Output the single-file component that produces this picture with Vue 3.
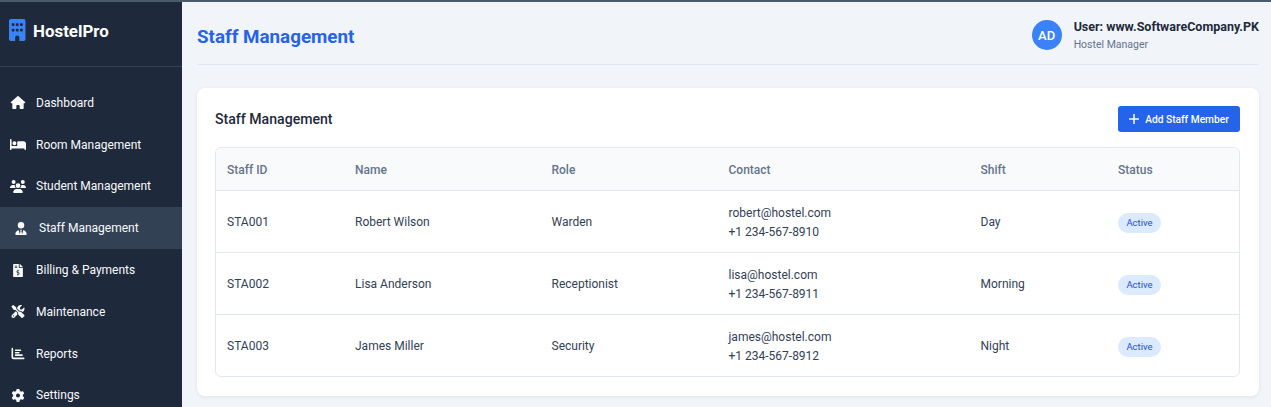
<script setup>
const nav = [
  { label: 'Dashboard', vb: '0 0 576 512', d: 'M575.8 255.5c0 18-15 32.1-32 32.1h-32l.7 160.2c0 2.7-.2 5.4-.5 8.1V472c0 22.1-17.9 40-40 40H456c-1.1 0-2.2 0-3.3-.1c-1.4 .1-2.8 .1-4.2 .1H416 392c-22.1 0-40-17.9-40-40V448 384c0-17.7-14.3-32-32-32H256c-17.7 0-32 14.3-32 32v64 24c0 22.1-17.9 40-40 40H160 128.1c-1.5 0-3-.1-4.5-.2c-1.2 .1-2.4 .2-3.6 .2H104c-22.1 0-40-17.9-40-40V360c0-.9 0-1.9 .1-2.8V287.6H32c-18 0-32-14-32-32.1c0-9 3-17 10-24L266.4 8c7-7 15-8 22-8s15 2 21 7L564.8 231.5c8 7 12 15 11 24z' },
  { label: 'Room Management', vb: '0 0 640 512', d: 'M32 32c17.7 0 32 14.3 32 32V320H288V160c0-17.7 14.3-32 32-32H544c53 0 96 43 96 96V448c0 17.7-14.3 32-32 32s-32-14.3-32-32V416H352 320 64v32c0 17.7-14.3 32-32 32s-32-14.3-32-32V64C0 46.3 14.3 32 32 32zm144 96a80 80 0 1 1 0 160 80 80 0 1 1 0-160z' },
  { label: 'Student Management', vb: '0 0 640 512', d: 'M144 0a80 80 0 1 1 0 160A80 80 0 1 1 144 0zM512 0a80 80 0 1 1 0 160A80 80 0 1 1 512 0zM0 298.7C0 239.8 47.8 192 106.7 192h42.7c15.9 0 31 3.5 44.6 9.7c-1.3 7.2-1.9 14.7-1.9 22.3c0 38.2 16.8 72.5 43.3 96c-.2 0-.4 0-.7 0H21.3C9.6 320 0 310.4 0 298.7zM405.3 320c-.2 0-.4 0-.7 0c26.6-23.5 43.3-57.8 43.3-96c0-7.6-.7-15-1.9-22.3c13.6-6.3 28.7-9.7 44.6-9.7h42.7C592.2 192 640 239.8 640 298.7c0 11.8-9.6 21.3-21.3 21.3H405.3zM224 224a96 96 0 1 1 192 0 96 96 0 1 1 -192 0zM128 485.3C128 411.7 187.7 352 261.3 352H378.7C452.3 352 512 411.7 512 485.3c0 14.7-11.9 26.7-26.7 26.7H154.7c-14.7 0-26.7-11.9-26.7-26.7z' },
  { label: 'Staff Management', active: true, vb: '0 0 448 512', d: 'M96 128a128 128 0 1 0 256 0A128 128 0 1 0 96 128zm94.5 200.2l18.6 31L175.8 483.1l-36-146.9c-2-8.1-9.8-13.4-17.9-11.3C51.9 342.4 0 405.8 0 481.3c0 17 13.8 30.7 30.7 30.7H162.5c0 0 0 0 .1 0H168 280h5.5c0 0 0 0 .1 0H417.3c17 0 30.7-13.8 30.7-30.7c0-75.5-51.9-138.9-121.9-156.4c-8.1-2-15.9 3.3-17.9 11.3l-36 146.9L238.9 359.2l18.6-31c6.4-10.7-1.3-24.2-13.7-24.2H224 204.3c-12.4 0-20.1 13.6-13.7 24.2z' },
  { label: 'Billing & Payments', vb: '0 0 384 512', d: 'M377 105L279.1 7c-4.5-4.5-10.6-7-17-7H256v128h128v-6.1c0-6.3-2.5-12.4-7-16.9zm-153 31V0H24C10.7 0 0 10.7 0 24v464c0 13.3 10.7 24 24 24h336c13.3 0 24-10.7 24-24V160H248c-13.2 0-24-10.8-24-24zM64 72c0-4.42 3.58-8 8-8h80c4.42 0 8 3.58 8 8v16c0 4.42-3.58 8-8 8H72c-4.42 0-8-3.58-8-8V72zm0 80v-16c0-4.42 3.58-8 8-8h80c4.42 0 8 3.58 8 8v16c0 4.42-3.58 8-8 8H72c-4.42 0-8-3.58-8-8zm144 263.88V440c0 4.42-3.58 8-8 8h-16c-4.42 0-8-3.58-8-8v-24.29c-11.29-.58-22.27-4.52-31.37-11.35-3.9-2.93-4.1-8.77-.57-12.14l11.75-11.21c2.77-2.64 6.89-2.76 10.13-.73 3.87 2.42 8.26 3.72 12.82 3.72h28.11c6.5 0 11.8-5.92 11.8-13.19 0-5.95-3.61-11.19-8.77-12.73l-45-13.5c-18.59-5.58-31.58-23.42-31.58-43.39 0-24.52 19.05-44.44 42.67-45.07V232c0-4.42 3.58-8 8-8h16c4.42 0 8 3.58 8 8v24.29c11.29.58 22.27 4.51 31.37 11.35 3.9 2.93 4.1 8.77.57 12.14l-11.75 11.21c-2.77 2.64-6.89 2.76-10.13.73-3.87-2.43-8.26-3.72-12.82-3.72h-28.11c-6.5 0-11.8 5.92-11.8 13.19 0 5.95 3.61 11.19 8.77 12.73l45 13.5c18.59 5.58 31.58 23.42 31.58 43.39 0 24.53-19.05 44.44-42.67 45.07z' },
  { label: 'Maintenance', vb: '0 0 512 512', d: 'M78.6 5C69.1-2.4 55.6-1.5 47 7L7 47c-8.5 8.5-9.4 22-2.1 31.6l80 104c4.5 5.9 11.6 9.4 19 9.4h54.1l109 109c-14.7 29-10 65.4 14.3 89.6l112 112c12.5 12.5 32.8 12.5 45.3 0l64-64c12.5-12.5 12.5-32.8 0-45.3l-112-112c-24.2-24.2-60.6-29-89.6-14.3l-109-109V104c0-7.5-3.5-14.5-9.4-19L78.6 5zM19.9 396.1C7.2 408.8 0 426.1 0 444.1C0 481.6 30.4 512 67.9 512c18 0 35.3-7.2 48-19.9L233.7 374.3c-7.8-20.9-9-43.6-3.6-65.1l-61.7-61.7L19.9 396.1zM512 144c0-10.5-1.1-20.7-3.2-30.5c-2.4-11.2-16.1-14.1-24.2-6l-63.9 63.9c-3 3-7.1 4.7-11.3 4.7H352c-8.8 0-16-7.2-16-16V102.6c0-4.2 1.7-8.3 4.7-11.3l63.9-63.9c8.1-8.1 5.2-21.8-6-24.2C388.7 1.1 378.5 0 368 0C288.5 0 224 64.5 224 144l0 .8 85.3 85.3c36-9.1 75.8 .5 104 28.7L429 274.5c49-23 83-72.8 83-130.5zM56 432a24 24 0 1 1 48 0 24 24 0 1 1 -48 0z' },
  { label: 'Reports', vb: '0 0 512 512', d: 'M32 32c17.7 0 32 14.3 32 32V400c0 8.8 7.2 16 16 16H480c17.7 0 32 14.3 32 32s-14.3 32-32 32H80c-44.2 0-80-35.8-80-80V64C0 46.3 14.3 32 32 32zm96 96c0-17.7 14.3-32 32-32l192 0c17.7 0 32 14.3 32 32s-14.3 32-32 32l-192 0c-17.7 0-32-14.3-32-32zm32 64H288c17.7 0 32 14.3 32 32s-14.3 32-32 32H160c-17.7 0-32-14.3-32-32s14.3-32 32-32zm0 96H416c17.7 0 32 14.3 32 32s-14.3 32-32 32H160c-17.7 0-32-14.3-32-32s14.3-32 32-32z' },
  { label: 'Settings', vb: '0 0 512 512', d: 'M495.9 166.6c3.2 8.7 .5 18.4-6.4 24.6l-43.3 39.4c1.1 8.3 1.7 16.8 1.7 25.4s-.6 17.1-1.7 25.4l43.3 39.4c6.9 6.2 9.6 15.9 6.4 24.6c-4.4 11.9-9.7 23.3-15.8 34.3l-4.7 8.1c-6.6 11-14 21.4-22.1 31.2c-5.9 7.2-15.7 9.6-24.5 6.8l-55.7-17.7c-13.4 10.3-28.2 18.9-44 25.4l-12.5 57.1c-2 9.1-9 16.3-18.2 17.8c-13.8 2.3-28 3.5-42.5 3.5s-28.7-1.2-42.5-3.5c-9.2-1.5-16.2-8.7-18.2-17.8l-12.5-57.1c-15.8-6.5-30.6-15.1-44-25.4L83.1 425.9c-8.8 2.8-18.6 .3-24.5-6.8c-8.1-9.8-15.5-20.2-22.1-31.2l-4.7-8.1c-6.1-11-11.4-22.4-15.8-34.3c-3.2-8.7-.5-18.4 6.4-24.6l43.3-39.4C64.6 273.1 64 264.6 64 256s.6-17.1 1.7-25.4L22.4 191.2c-6.9-6.2-9.6-15.9-6.4-24.6c4.4-11.9 9.7-23.3 15.8-34.3l4.7-8.1c6.6-11 14-21.4 22.1-31.2c5.9-7.2 15.7-9.6 24.5-6.8l55.7 17.7c13.4-10.3 28.2-18.9 44-25.4l12.5-57.1c2-9.1 9-16.3 18.2-17.8C227.3 1.2 241.5 0 256 0s28.7 1.2 42.5 3.5c9.2 1.5 16.2 8.7 18.2 17.8l12.5 57.1c15.8 6.5 30.6 15.1 44 25.4l55.7-17.7c8.8-2.8 18.6-.3 24.5 6.8c8.1 9.8 15.5 20.2 22.1 31.2l4.7 8.1c6.1 11 11.4 22.4 15.8 34.3zM256 336a80 80 0 1 0 0-160 80 80 0 1 0 0 160z' }
]
const staff = [
  { id: 'STA001', name: 'Robert Wilson', role: 'Warden', email: 'robert@hostel.com', phone: '+1 234-567-8910', shift: 'Day' },
  { id: 'STA002', name: 'Lisa Anderson', role: 'Receptionist', email: 'lisa@hostel.com', phone: '+1 234-567-8911', shift: 'Morning' },
  { id: 'STA003', name: 'James Miller', role: 'Security', email: 'james@hostel.com', phone: '+1 234-567-8912', shift: 'Night' }
]
</script>

<template>
  <div class="page">
    <div class="topline"></div>
    <div class="shell">
      <aside class="sidebar">
        <div class="brand">
          <svg class="logo" viewBox="0 0 384 512">
            <path fill="#3b82f6" d="M48 0C21.5 0 0 21.5 0 48V464c0 26.5 21.5 48 48 48h96V432c0-26.5 21.5-48 48-48s48 21.5 48 48v80h96c26.5 0 48-21.5 48-48V48c0-26.5-21.5-48-48-48H48zM64 240c0-8.8 7.2-16 16-16h32c8.8 0 16 7.2 16 16v32c0 8.8-7.2 16-16 16H80c-8.8 0-16-7.2-16-16V240zm112-16h32c8.8 0 16 7.2 16 16v32c0 8.8-7.2 16-16 16H176c-8.8 0-16-7.2-16-16V240c0-8.8 7.2-16 16-16zm80 16c0-8.8 7.2-16 16-16h32c8.8 0 16 7.2 16 16v32c0 8.8-7.2 16-16 16H272c-8.8 0-16-7.2-16-16V240zM80 96h32c8.8 0 16 7.2 16 16v32c0 8.8-7.2 16-16 16H80c-8.8 0-16-7.2-16-16V112c0-8.8 7.2-16 16-16zm80 16c0-8.8 7.2-16 16-16h32c8.8 0 16 7.2 16 16v32c0 8.8-7.2 16-16 16H176c-8.8 0-16-7.2-16-16V112zM272 96h32c8.8 0 16 7.2 16 16v32c0 8.8-7.2 16-16 16H272c-8.8 0-16-7.2-16-16V112c0-8.8 7.2-16 16-16z" />
          </svg>
          <span class="brand-name">HostelPro</span>
        </div>
        <nav class="nav">
          <a v-for="item in nav" :key="item.label" class="nav-item" :class="{ active: item.active }">
            <span class="nav-icon"><svg :viewBox="item.vb"><path fill="currentColor" :d="item.d" /></svg></span>
            <span>{{ item.label }}</span>
          </a>
        </nav>
      </aside>
      <main class="main">
        <header class="header">
          <h1 class="title">Staff Management</h1>
          <div class="user">
            <div class="avatar">AD</div>
            <div>
              <div class="user-name">User: www.SoftwareCompany.PK</div>
              <div class="user-role">Hostel Manager</div>
            </div>
          </div>
        </header>
        <section class="card">
          <div class="card-head">
            <h2 class="card-title">Staff Management</h2>
            <button class="add-btn">
              <svg viewBox="0 0 10 10"><path d="M5 .5v9M.5 5h9" stroke="currentColor" stroke-width="1.5" stroke-linecap="round" /></svg>
              Add Staff Member
            </button>
          </div>
          <div class="table-wrap">
            <table class="table">
              <thead>
                <tr>
                  <th class="c1">Staff ID</th>
                  <th class="c2">Name</th>
                  <th class="c3">Role</th>
                  <th class="c4">Contact</th>
                  <th class="c5">Shift</th>
                  <th>Status</th>
                </tr>
              </thead>
              <tbody>
                <tr v-for="s in staff" :key="s.id">
                  <td>{{ s.id }}</td>
                  <td>{{ s.name }}</td>
                  <td>{{ s.role }}</td>
                  <td>{{ s.email }}<br />{{ s.phone }}</td>
                  <td>{{ s.shift }}</td>
                  <td><span class="badge">Active</span></td>
                </tr>
              </tbody>
            </table>
          </div>
        </section>
      </main>
    </div>
  </div>
</template>

<style>
html, body { margin: 0; overflow: hidden; }
</style>

<style scoped>
.page {
  width: 1271px;
  height: 407px;
  overflow: hidden;
  display: flex;
  flex-direction: column;
  font-family: Roboto, sans-serif;
  background: #f1f5f9;
}
.topline { height: 2px; flex: none; background: #4b5a68; }
.shell { flex: 1; display: flex; min-height: 0; }
.sidebar {
  width: 182px;
  flex: none;
  background: #1e293b;
  color: #fff;
}
.brand {
  height: 65px;
  box-sizing: border-box;
  border-bottom: 1px solid #334155;
  padding: 17px 0 0 9px;
  display: flex;
  align-items: flex-start;
  gap: 7.5px;
}
.logo { width: 16.5px; height: 22px; flex: none; }
.brand-name { font-size: 16.9px; font-weight: 700; line-height: 24px; }
.nav { padding-top: 15px; }
.nav-item {
  height: 41.8px;
  display: flex;
  align-items: center;
  padding-left: 10px;
  font-size: 12px;
  color: #f8fafc;
}
.nav-item.active { background: #334155; padding-left: 13px; }
.nav-icon { width: 26px; flex: none; display: flex; }
.nav-icon svg { width: 16px; height: 13px; }
.main { flex: 1; min-width: 0; padding: 0 12px 0 15px; }
.header {
  height: 63px;
  box-sizing: border-box;
  border-bottom: 1px solid #e2e8f0;
  display: flex;
  justify-content: space-between;
  align-items: center;
  padding-top: 4px;
}
.title { margin: 3px 0 0; font-size: 18.8px; font-weight: 700; color: #2563eb; }
.user { display: flex; align-items: center; gap: 12px; }
.avatar {
  width: 30px;
  height: 30px;
  border-radius: 50%;
  background: #3b82f6;
  color: #fff;
  font-size: 13px;
  font-weight: 500;
  display: flex;
  align-items: center;
  justify-content: center;
}
.user-name { font-size: 12.5px; font-weight: 700; color: #1e293b; line-height: 18px; }
.user-role { font-size: 10.5px; color: #64748b; line-height: 16px; margin-top: 1px; }
.card {
  margin-top: 23px;
  height: 308px;
  box-sizing: border-box;
  background: #fff;
  border-radius: 8px;
  box-shadow: 0 1px 4px rgba(15, 23, 42, 0.07);
  padding: 18px 19px 0 18px;
}
.card-head {
  height: 26px;
  display: flex;
  justify-content: space-between;
  align-items: center;
  margin-bottom: 15px;
}
.card-title { margin: 0; font-size: 14.1px; font-weight: 500; color: #1e293b; }
.add-btn {
  height: 26px;
  width: 122px;
  border: none;
  border-radius: 3px;
  background: #2563eb;
  color: #fff;
  font: 500 10.2px Roboto, sans-serif;
  display: flex;
  align-items: center;
  justify-content: center;
  gap: 6px;
}
.add-btn svg { width: 10px; height: 10px; }
.table-wrap {
  border: 1px solid #e2e8f0;
  border-radius: 6px;
  overflow: hidden;
}
.table {
  width: 100%;
  border-collapse: collapse;
  table-layout: fixed;
  font-size: 12px;
  color: #334155;
}
.table th {
  box-sizing: border-box;
  height: 42px;
  padding: 3px 11px 0;
  text-align: left;
  font-weight: 500;
  color: #64748b;
  background: #f8fafc;
  border-bottom: 1px solid #e2e8f0;
}
.c1 { width: 128px; }
.c2 { width: 196.5px; }
.c3 { width: 177px; }
.c4 { width: 252px; }
.c5 { width: 137.5px; }
.table td {
  box-sizing: border-box;
  height: 62px;
  padding: 3px 11px 0;
  line-height: 19px;
  border-bottom: 1px solid #e2e8f0;
}
.table tr:last-child td { border-bottom: none; }
.badge {
  display: inline-block;
  width: 43px;
  height: 20px;
  line-height: 20px;
  text-align: center;
  border-radius: 10px;
  background: #dbeafe;
  color: #1d4ed8;
  font-size: 9.5px;
  font-weight: 400;
  vertical-align: middle;
}
</style>
